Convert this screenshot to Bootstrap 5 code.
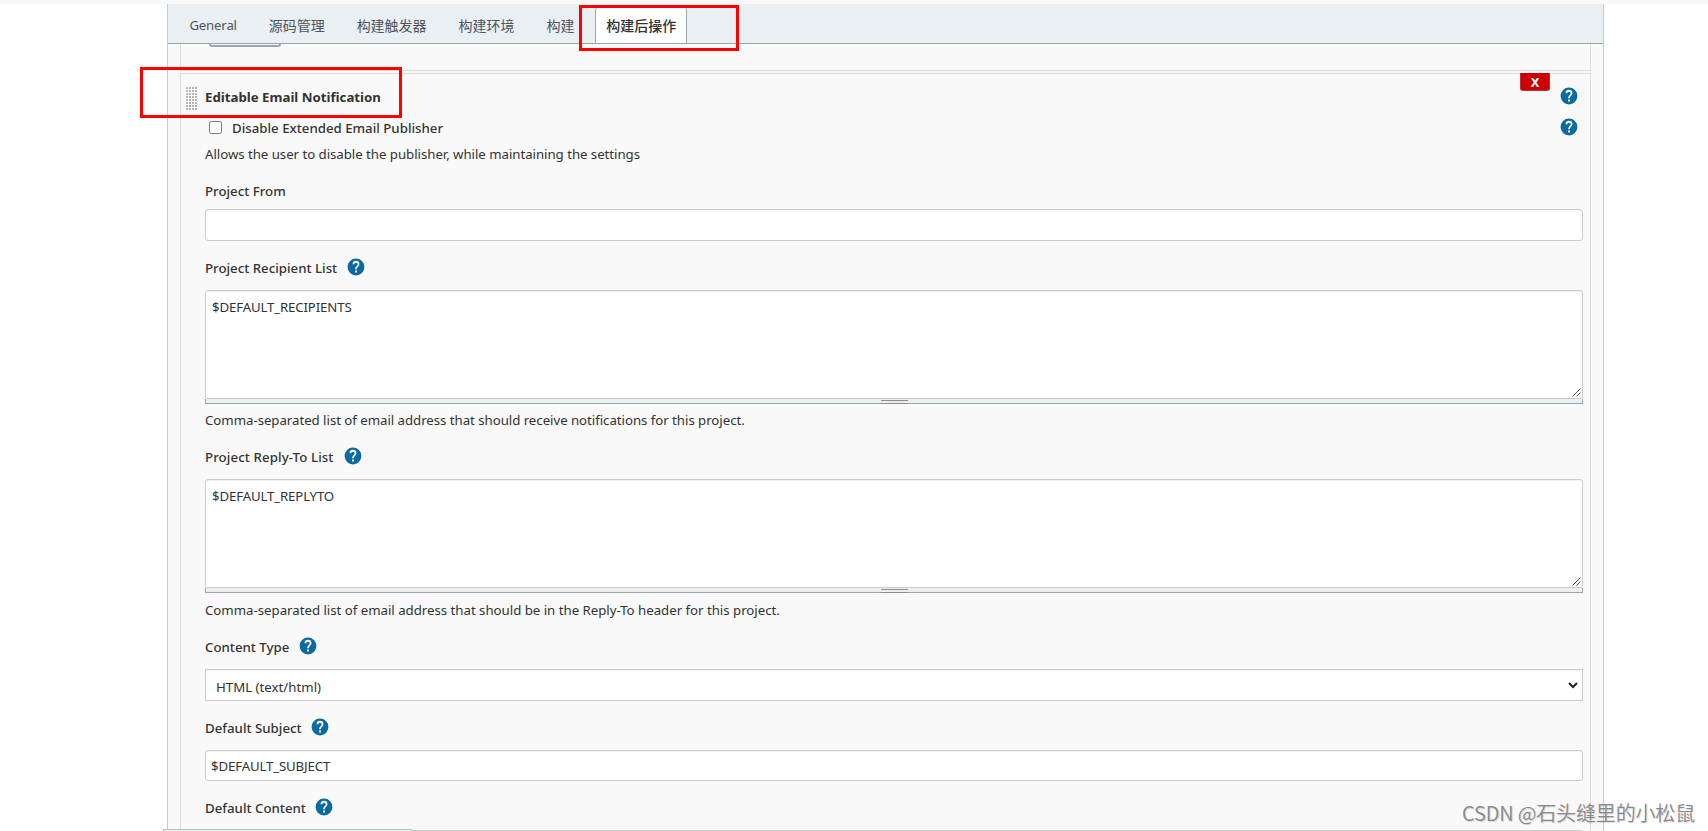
<!DOCTYPE html>
<html lang="zh">
<head>
<meta charset="utf-8">
<title>General</title>
<link rel="stylesheet" href="https://cdn.jsdelivr.net/npm/bootstrap@5.3.0/dist/css/bootstrap.min.css">
<style>
body{font-family:"Noto Sans","Noto Sans CJK SC",sans-serif;font-size:13.25px;line-height:20px;color:#333;height:831px;overflow:hidden}
.topline{height:4px;background:#f8f8f8}
.shell{width:1437px;height:827px;margin-left:167px;border:1px solid #ccc;border-width:0 1px;background:#f9f9f9}
.tabs{height:40px;background:#e9eff2;border-bottom:1px solid #98a8b0;padding-left:.5px}
.tabs .tab{font:14px/20px "Noto Sans CJK SC",sans-serif;padding:0 10px 2px;border:1px solid transparent;border-width:0 1px;margin-left:9.9px;color:#4d545d;height:35px;white-space:nowrap}
.tabs .latin{font:13.25px/20px "Noto Sans",sans-serif;letter-spacing:-.2px}
.tabs .tab.active{background:#fff;border-color:#98a8b0;color:#333;font-weight:500;border-radius:2px 2px 0 0}
.block{width:1411px;margin-left:12px;border:1px solid #ddd}
.prev{height:27px;border-top:0;padding-left:28px}
.prev i{display:block;width:72px;height:3px;border:2px solid #98a8b0;border-top:0;border-radius:0 0 4px 4px}
.main{height:780px;margin-top:2px;padding-left:24px}
.fieldw{width:1378px}
.title-row{height:38px;padding:13px 5px 0 0}
.check-row{height:28px;padding:6px 5px 0 0}
.note{letter-spacing:-.04px}
.lbl{font-weight:500}
.help{width:18px;height:18px;flex:none}
.lbl .help{margin-left:10px}
.field{width:1378px;background:#fff;border:1px solid #ccc;border-radius:3px;box-shadow:inset 0 1px 1px rgba(0,0,0,.06);letter-spacing:-.15px;color:#333}
.area{height:109px;padding:6px;border-bottom-left-radius:2px;border-bottom-right-radius:2px}
.area svg{right:1px;bottom:1px;width:9px;height:9px}
.grab{height:5px;background:#e9eff2;border:1px solid #98a8b0;border-top:0}
.grab i{width:27px;height:4px;border:1px solid #8a908c;border-width:1px 0;margin-top:1px}
.del{left:1339px;top:-1px;width:30px;height:18px;background:#c00;color:#fff;font-weight:700;font-size:13px;line-height:18px;border-radius:0 0 3px 3px;border:1px solid #b33;border-top:0}
.grip{left:4px;top:12px;width:12px;height:24px;background:radial-gradient(circle at 2px 2px,#b4b4b4 1px,#fff 1.3px) 0 0/3px 3px}
.check{width:13px;height:13px;border:1px solid #767676;border-radius:2.5px;background:#fff;margin:3px 10px 0 4px}
.redbox{border:3px solid #f00}
.rb-title{left:140px;top:67px;width:262px;height:51px}
.rb-tab{left:579px;top:5px;width:160px;height:46px}
.status{left:163px;top:829px;width:251px;height:4px;border:1px solid #a9c6b6;border-radius:0 4px 0 0;background:#e9f3ec}
.wm{left:1462px;top:798px;font:20px/30px "Noto Sans CJK SC",sans-serif;font-weight:350;letter-spacing:-.15px;color:#8a8a8a;text-shadow:1px 1px 1px rgba(0,0,0,.15);white-space:nowrap}
</style>
</head>
<body class="position-relative bg-white">
<svg class="d-none"><symbol id="q" viewBox="0 0 24 24"><path fill="#0b6aa2" d="M12 .8a11.200 11.200 0 1 0 0 22.400a11.200 11.200 0 0 0 0-22.400zm1.300 18.400h-2.500v-2.400h2.500zm2.200-8.400l-1 1.100c-.8.8-1.200 1.500-1.200 3.100h-2.400v-.6c0-1.200.5-2.300 1.300-3.100l1.400-1.400c.4-.4.6-.9.6-1.500a2.200 2.200 0 0 0-4.400 0H7.400a4.600 4.600 0 0 1 9.200 0c0 .9-.4 1.800-1.100 2.400z"/></symbol>
<symbol id="rs" viewBox="0 0 9 9"><path d="M.5 8.500l8-8M4.500 8.500l4-4" stroke="#555" fill="none"/></symbol></svg>
<div class="topline"></div>
<main class="shell">
  <nav class="tabs d-flex align-items-end">
    <span class="tab latin d-flex align-items-center">General</span>
    <span class="tab d-flex align-items-center">源码管理</span>
    <span class="tab d-flex align-items-center">构建触发器</span>
    <span class="tab d-flex align-items-center">构建环境</span>
    <span class="tab d-flex align-items-center">构建</span>
    <span class="tab active d-flex align-items-center">构建后操作</span>
  </nav>
  <section class="block prev"><i></i></section>
  <section class="block main position-relative">
    <span class="grip position-absolute"></span>
    <button class="del position-absolute p-0 text-center">X</button>
    <div class="fieldw title-row d-flex justify-content-between"><b>Editable Email Notification</b><svg class="help"><use href="#q"/></svg></div>
    <div class="fieldw check-row d-flex"><span class="check"></span><span class="lbl">Disable Extended Email Publisher</span><svg class="help ms-auto"><use href="#q"/></svg></div>
    <div class="note" style="height:41px;padding-top:4px">Allows the user to disable the publisher, while maintaining the settings</div>
    <div class="lbl" style="height:28px">Project From</div>
    <div class="field" style="height:32px"></div>
    <div class="lbl d-flex" style="height:49px;padding-top:17px">Project Recipient List<svg class="help"><use href="#q"/></svg></div>
    <div class="field area position-relative">$DEFAULT_RECIPIENTS<svg class="position-absolute"><use href="#rs"/></svg></div>
    <div class="fieldw grab d-flex justify-content-center"><i></i></div>
    <div class="note" style="height:43px;padding-top:6px">Comma-separated list of email address that should receive notifications for this project.</div>
    <div class="lbl d-flex" style="height:32px;letter-spacing:.1px">Project Reply-To List<svg class="help"><use href="#q"/></svg></div>
    <div class="field area position-relative">$DEFAULT_REPLYTO<svg class="position-absolute"><use href="#rs"/></svg></div>
    <div class="fieldw grab d-flex justify-content-center"><i></i></div>
    <div class="note" style="height:44px;padding-top:7px;letter-spacing:-.02px">Comma-separated list of email address that should be in the Reply-To header for this project.</div>
    <div class="lbl d-flex" style="height:32px">Content Type<svg class="help"><use href="#q"/></svg></div>
    <div class="field rounded-0 d-flex justify-content-between align-items-center" style="height:32px;padding:3px 4px 0 10px;letter-spacing:0">HTML (text/html)<svg width="10" height="8" viewBox="0 0 10 8" style="margin-top:-3px"><path d="M1 2l4 4 4-4" fill="none" stroke="#222" stroke-width="2"/></svg></div>
    <div class="lbl d-flex" style="height:49px;padding-top:17px">Default Subject<svg class="help" style="margin-left:9px"><use href="#q"/></svg></div>
    <div class="field" style="height:31px;padding:5px">$DEFAULT_SUBJECT</div>
    <div class="lbl d-flex" style="height:49px;padding-top:17px">Default Content<svg class="help" style="margin-left:9px"><use href="#q"/></svg></div>
    <div class="field" style="height:31px"></div>
  </section>
</main>
<div class="redbox rb-title position-absolute"></div>
<div class="redbox rb-tab position-absolute"></div>
<div class="status position-absolute"></div>
<div class="wm position-absolute">CSDN @石头缝里的小松鼠</div>
<script src="https://cdn.jsdelivr.net/npm/bootstrap@5.3.0/dist/js/bootstrap.bundle.min.js"></script>
</body>
</html>
